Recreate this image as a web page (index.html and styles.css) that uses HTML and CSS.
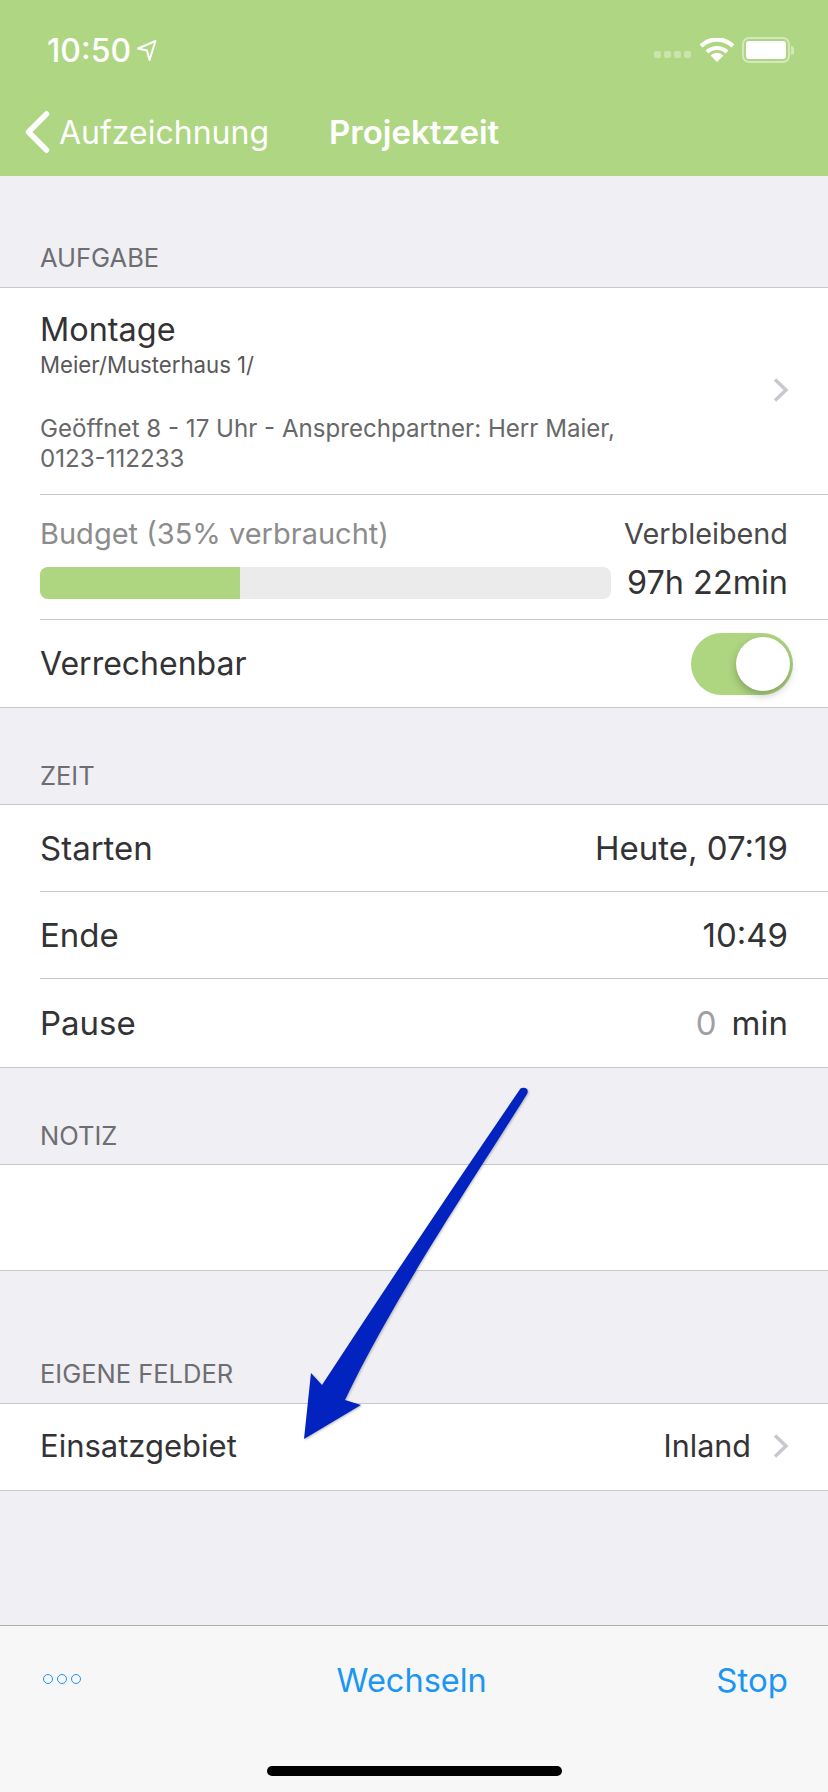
FILE: index.html
```html
<!DOCTYPE html>
<html lang="en">
<head>
    <meta charset="UTF-8">
    <meta name="viewport" content="width=device-width, initial-scale=1.0">
    <title>Projektzeit</title>
    <link rel="stylesheet" href="styles.css">
</head>
<body>
    <div class="screen">
        <div class="top-bar">
            <div class="status-bar">
                <div class="status-time">
                    <span>10:50</span>
                    <svg class="location-icon" width="22" height="23" viewBox="0 0 22 23">
                        <path d="M19.5 2 L2 9.5 L11 11.5 L13.5 21 Z" fill="none" stroke="#fff" stroke-width="2" stroke-linejoin="round"/>
                    </svg>
                </div>
                <div class="status-icons">
                    <div class="signal">
                        <i></i><i></i><i></i><i></i>
                    </div>
                    <svg class="wifi-icon" width="34" height="24" viewBox="0 0 34 24">
                        <path d="M1 8 A23 23 0 0 1 33 8" fill="none" stroke="#fff" stroke-width="4.4"/>
                        <path d="M7 14 A14.5 14.5 0 0 1 27 14" fill="none" stroke="#fff" stroke-width="4.2"/>
                        <path d="M17 24 L10.5 17.5 A9 9 0 0 1 23.5 17.5 Z" fill="#fff"/>
                    </svg>
                    <div class="battery"><div class="battery-level"></div></div>
                    <div class="battery-cap"></div>
                </div>
            </div>
            <div class="nav-bar">
                <svg class="back-icon" width="28" height="42" viewBox="0 0 28 42">
                    <path d="M23.5 3 L5.5 21 L23.5 39" fill="none" stroke="#fff" stroke-width="5.5" stroke-linecap="round" stroke-linejoin="round"/>
                </svg>
                <span class="back-label">Aufzeichnung</span>
                <span class="nav-title">Projektzeit</span>
            </div>
        </div>

        <div class="section-title section-first">AUFGABE</div>
        <div class="group">
            <div class="task-row">
                <div class="task-text">
                    <div class="task-name">Montage</div>
                    <div class="task-detail">Meier/Musterhaus 1/</div>
                    <div class="task-note">Geöffnet 8 - 17 Uhr - Ansprechpartner: Herr Maier,<br>0123-112233</div>
                </div>
                <svg class="chevron chevron-task" width="18" height="26" viewBox="0 0 18 26">
                    <path d="M3 2.5 L14 13 L3 23.5" fill="none" stroke="#c7c7cc" stroke-width="3.4"/>
                </svg>
            </div>
            <div class="budget-row">
                <div class="budget-left">
                    <div class="budget-label">Budget (35% verbraucht)</div>
                    <div class="budget-track"><div class="budget-fill" style="width: 35%"></div></div>
                </div>
                <div class="budget-right">
                    <div class="budget-remain">Verbleibend</div>
                    <div class="budget-value">97h 22min</div>
                </div>
            </div>
            <div class="row row-toggle">
                <span>Verrechenbar</span>
                <div class="toggle"><div class="toggle-knob"></div></div>
            </div>
        </div>

        <div class="section-title section-zeit">ZEIT</div>
        <div class="group">
            <div class="row row-time">
                <span>Starten</span>
                <span>Heute, 07:19</span>
            </div>
            <div class="row row-time">
                <span>Ende</span>
                <span>10:49</span>
            </div>
            <div class="row row-pause">
                <span>Pause</span>
                <span><span class="pause-value">0</span>min</span>
            </div>
        </div>

        <div class="section-title section-zeit">NOTIZ</div>
        <div class="group group-note"></div>

        <div class="section-title section-fields">EIGENE FELDER</div>
        <div class="group">
            <div class="row row-field">
                <span>Einsatzgebiet</span>
                <span class="field-value">
                    Inland
                    <svg class="chevron" width="18" height="26" viewBox="0 0 18 26">
                        <path d="M3 2.5 L14 13 L3 23.5" fill="none" stroke="#c7c7cc" stroke-width="3.4"/>
                    </svg>
                </span>
            </div>
        </div>

        <div class="spacer"></div>

        <div class="toolbar">
            <div class="toolbar-items">
                <div class="more-dots"><i></i><i></i><i></i></div>
                <span class="toolbar-center">Wechseln</span>
                <span>Stop</span>
            </div>
            <div class="home-indicator"></div>
        </div>

        <!-- Annotation arrow drawn over the screenshot -->
        <svg class="annotation" width="828" height="1792" viewBox="0 0 828 1792">
            <path d="M520.5 1088.5 Q524 1087 527 1089 Q528.5 1091.5 527 1094 C480 1170 395 1295 345 1400 L361 1405 L304 1439 L311 1373 L322 1385 Q420 1235 520.5 1088.5 Z" fill="#0323c0"/>
        </svg>
    </div>
</body>
</html>
```

FILE: styles.css
```css
* {
    margin: 0;
    padding: 0;
    box-sizing: border-box;
    font-family: Inter, 'Liberation Sans', sans-serif;
}

body {
    background-color: #efeff4;
    width: 828px;
    height: 1792px;
    overflow: hidden;
}

.screen {
    position: relative;
    display: flex;
    flex-direction: column;
    height: 1792px;
    color: #333335;
}

/* Top bar */
.top-bar {
    background-color: #afd683;
    height: 176px;
    color: white;
    flex-shrink: 0;
}

.status-bar {
    display: flex;
    justify-content: space-between;
    align-items: center;
    height: 100px;
    padding: 0 34px 0 47px;
}

.status-time {
    display: flex;
    align-items: center;
    gap: 5px;
    font-size: 32px;
    font-weight: 500;
}

.status-icons {
    display: flex;
    align-items: center;
}

.signal {
    display: flex;
    gap: 3px;
    margin-right: 9px;
    margin-top: 8px;
}

.signal i {
    width: 7px;
    height: 7px;
    border-radius: 2px;
    background: rgba(255, 255, 255, 0.35);
}

.wifi-icon {
    margin-right: 8px;
}

.battery {
    width: 48px;
    height: 26px;
    border: 2px solid rgba(255, 255, 255, 0.45);
    border-radius: 7px;
    padding: 2px;
}

.battery-level {
    background: white;
    height: 100%;
    border-radius: 3px;
}

.battery-cap {
    width: 3px;
    height: 9px;
    margin-left: 1px;
    border-radius: 0 3px 3px 0;
    background: rgba(255, 255, 255, 0.45);
}

.nav-bar {
    display: flex;
    align-items: center;
    height: 76px;
    padding: 0 0 12px 23px;
}

.back-label {
    margin-left: 8px;
    font-size: 32px;
}

.nav-title {
    margin-left: 60px;
    font-size: 33px;
    font-weight: 600;
}

/* Section headers */
.section-title {
    height: 30px;
    padding-left: 40px;
    font-size: 25.5px;
    line-height: 30px;
    color: #6d6d72;
    flex-shrink: 0;
}

.section-first {
    margin-top: 67px;
    margin-bottom: 14px;
}

.section-zeit {
    margin-top: 53px;
    margin-bottom: 13px;
}

.section-fields {
    margin-top: 88px;
    margin-bottom: 14px;
}

/* Groups and rows */
.group {
    background: white;
    border-top: 1px solid #c8c7cc;
    border-bottom: 1px solid #c8c7cc;
    flex-shrink: 0;
}

.group-note {
    height: 107px;
}

.row {
    display: flex;
    justify-content: space-between;
    align-items: center;
    margin-left: 40px;
    padding-right: 40px;
    font-size: 33px;
}

.row-time {
    height: 87px;
    border-bottom: 1px solid #c8c7cc;
}

.row-pause {
    height: 88px;
}

.pause-value {
    color: #a0a0a4;
    margin-right: 15px;
}

.row-toggle {
    height: 87px;
    padding-right: 35px;
    font-size: 32px;
}

.row-field {
    height: 86px;
    padding-right: 38px;
    padding-bottom: 3px;
    font-size: 31px;
}

.field-value {
    display: flex;
    align-items: center;
    gap: 21px;
    font-size: 30.5px;
}

/* Task row */
.task-row {
    display: flex;
    justify-content: space-between;
    align-items: center;
    margin-left: 40px;
    padding-right: 38px;
    height: 207px;
    border-bottom: 1px solid #c8c7cc;
}

.chevron-task {
    margin-bottom: 3px;
}

.task-name {
    font-size: 32.4px;
    line-height: 40px;
    margin-top: 2px;
}

.task-detail {
    font-size: 22.2px;
    line-height: 28px;
    margin-top: 1px;
    color: #58585a;
}

.task-note {
    font-size: 24.1px;
    line-height: 30px;
    margin-top: 35px;
    color: #68686a;
}

.budget-row {
    display: flex;
    justify-content: space-between;
    margin-left: 40px;
    padding-right: 40px;
    height: 125px;
    border-bottom: 1px solid #c8c7cc;
}

.budget-left {
    width: 571px;
}

.budget-label {
    margin-top: 21px;
    font-size: 29px;
    line-height: 36px;
    color: #8c8c8c;
}

.budget-track {
    height: 32px;
    margin-top: 15px;
    background: #ebebeb;
    border-radius: 8px;
    overflow: hidden;
}

.budget-fill {
    height: 100%;
    background: #aed580;
}

.budget-right {
    text-align: right;
}

.budget-remain {
    margin-top: 21px;
    font-size: 28.8px;
    line-height: 36px;
    color: #4a4a4c;
}

.budget-value {
    margin-top: 11px;
    font-size: 32.4px;
    line-height: 40px;
}

/* Toggle */
.toggle {
    position: relative;
    width: 102px;
    height: 62px;
    background: #aed580;
    border-radius: 31px;
}

.toggle-knob {
    position: absolute;
    top: 4px;
    right: 3px;
    width: 54px;
    height: 54px;
    background: white;
    border-radius: 50%;
    box-shadow: 0 4px 8px rgba(0, 0, 0, 0.25);
}

/* Toolbar */
.spacer {
    flex: 1;
}

.toolbar {
    background: #f7f7f8;
    border-top: 1px solid #aeaeb2;
    height: 167px;
    flex-shrink: 0;
}

.toolbar-items {
    display: flex;
    align-items: center;
    justify-content: space-between;
    height: 108px;
    padding: 0 40px 0 43px;
    font-size: 33px;
    color: #1c96f3;
}

.toolbar-center {
    margin-left: 26px;
    font-size: 32.5px;
}

.more-dots {
    display: flex;
    gap: 4px;
    margin-top: -2px;
}

.more-dots i {
    width: 10px;
    height: 10px;
    border: 1.5px solid #1c96f3;
    border-radius: 50%;
}

.home-indicator {
    width: 295px;
    height: 10px;
    margin: 32px 0 0 267px;
    background: black;
    border-radius: 5px;
}

.annotation {
    position: absolute;
    top: 0;
    left: 0;
    filter: drop-shadow(1px 1px 1px rgba(0, 0, 0, 0.25));
}
```
